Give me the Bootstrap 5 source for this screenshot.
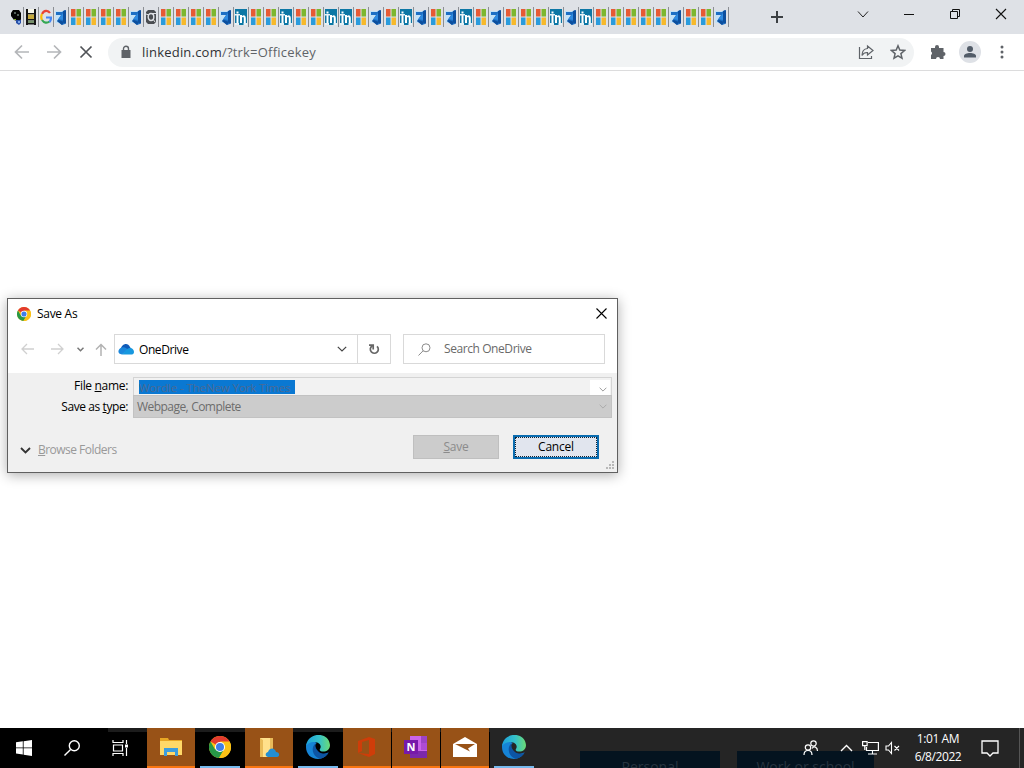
<!DOCTYPE html>
<html lang="en">
<head>
<meta charset="utf-8">
<title>Save As</title>
<link href="https://cdn.jsdelivr.net/npm/bootstrap@5.3.0/dist/css/bootstrap.min.css" rel="stylesheet">
<style>
body{font-family:"Open Sans","Noto Sans",sans-serif;font-size:12px;line-height:16px;width:1024px;height:768px;overflow:hidden;color:#000}
svg{display:block;flex:none}
.tabstrip{height:34px;background:#dee1e6;padding-left:9px}
.tab-item{width:15px;height:20px;border-right:1px solid #8b8e93;padding-left:1px}
.tab-item svg{width:12px;height:16px}
.toolbar{height:37px;border-bottom:1px solid #dcdcdd;padding-left:14px;background:#fff}
.omnibox{width:806px;height:29px;border-radius:15px;background:#f1f3f4;margin-left:14px;padding:0 7px 0 13px}
.url{font-size:13px;letter-spacing:.21px;color:#5f6368}
.url b{font-weight:400;color:#303134}
.avatar{width:22px;height:22px;background:#dee1e6}
.dialog-win{left:7px;top:298px;width:611px;height:175px;border:1px solid #606060;background:#f0f0f0;box-shadow:0 2px 12px rgba(0,0,0,.32)}
.dlg-top{height:74px;background:#fff}
.box{height:30px;border:1px solid #d9d9d9}
.lbl{width:120px;text-align:right;letter-spacing:-.32px}
.t{letter-spacing:-.3px}
.namebox{width:479px;height:18px;background:#f2f2f2;border:1px solid #d4d4d4;border-bottom:0;padding:2px 1px 0 5px}
.sel{width:156px;height:14px;background:#0a78d2;color:#4a6a94;line-height:16px;font-size:11.5px;white-space:nowrap;letter-spacing:-.1px;overflow:hidden}
.typebox{width:479px;height:23px;background:#ccc;border:1px solid #c2c2c2;color:#6d6d6d;padding:0 4px 0 3px;letter-spacing:-.28px}
.dbtn{width:86px;height:24px;border-radius:0;font-size:12px;line-height:16px;padding:0;letter-spacing:-.2px}
.b-save,.b-save:disabled{background:#ccc;border:1px solid #bfbfbf;color:#8b8b8b;opacity:1}
.b-cancel{background:#e1e5ee;border:2px solid #0a6cb0;outline:1px dotted #123;outline-offset:-3px;color:#000}
.taskbar{height:40px;background:#000;color:#fff}
.tk{width:48px;height:40px;margin-right:1px;border-bottom:2px solid transparent}
.sys{width:48px;height:40px}
.hot{background:#985217;border-bottom-color:#f97510}
.run::after{content:"";position:absolute;left:4px;right:4px;bottom:-2px;height:2px;background:#76b9ed}
.tray{background:#252525;overflow:hidden}
.ghost{top:23px;height:17px;background:#04131f;color:#27343f;font-size:14px;line-height:31px;text-align:center;white-space:nowrap}
.clock{font-size:12px;line-height:18px;letter-spacing:-.42px;width:60px;text-align:center}
.strip{left:108px;top:0;height:4px;width:382px;background:#1c1c1c}
</style>
</head>
<body class="d-flex flex-column bg-white">
<svg width="0" height="0" class="position-absolute">
 <defs>
  <symbol id="i-m" viewBox="0 0 12 16"><path fill="#e65a35" d="M1 0h4.500v7.500H1z"/><path fill="#7db72f" d="M6.500 0H11v7.500H6.500z"/><path fill="#2a9bdc" d="M1 8.500h4.500V16H1z"/><path fill="#f6b92c" d="M6.500 8.500H11V16H6.500z"/></symbol>
  <symbol id="i-v" viewBox="0 0 12 16"><path fill="#c3e1f6" d="M0 2h9v12H0z"/><path fill="#1d6fc4" d="M1 3h6l3-2v14l-3 1-5-4 4-6H1z"/><path fill="#0d4f9e" d="M8 2 11 1v14L8 13z"/><path fill="#0d4f9e" d="M2 12l2-1 5 2-2 3z"/><path fill="#2f8be0" d="M3.500 10 8 4v7z"/></symbol>
  <symbol id="i-i" viewBox="0 0 12 16"><path fill="#0c77a5" d="M0 0h12v16H0z"/><path fill="#fff" d="M1.500 2.500h2v2h-2zM1.500 6h2v8h-2zM5 6h2v1.200C8 5.500 10.800 5.700 10.800 9v5h-2V9.500C8.800 7.500 7 7.700 7 9.500V14H5z"/><path fill="#e6f2f7" d="M0 5h5v1.500H0zM0 14h4v2H0zM8.500 14H12v2H8.500z"/></symbol>
  <symbol id="i-g" viewBox="0 0 12 16"><g fill="none" stroke-width="2.200"><path stroke="#e94335" d="M2 5C4 1 8 1 10 4"/><path stroke="#fabb05" d="M2 5Q.500 8 2 11"/><path stroke="#34a853" d="M2 11c2 3 5 3.500 7.500 1.500"/><path stroke="#4285f4" d="M6 8.500h5q0 3-1.500 4.500"/></g></symbol>
  <symbol id="i-k" viewBox="0 0 12 16"><path fill="#050505" d="M3 1h6l2 3v6l-1 3-3-1-3-1-3-4V4z"/><path fill="#53605a" d="M4 3h2v2H4zM7 5h2v2H7z"/><path fill="#7fb42b" d="M4 10h2v1H4z"/><path fill="#2850a8" d="M6 11h5v3l-2 2-3-2z"/><path fill="#7ea6e8" d="M8 12h2v2H8z"/></symbol>
  <symbol id="i-w" viewBox="0 0 12 16"><path fill="#141414" d="M1 0h2v16H1zM9 0h2v16H9zM1 4h10v1.500H1zM1 10h10v1.500H1zM1 14h10v1.500H1z"/><path fill="#f5f5e9" d="M3 0h6v4H3z"/><path fill="#c5a93b" d="M3 5.500h6V10H3z"/><path fill="#78926b" d="M3 11.500h6V14H3z"/></symbol>
  <symbol id="i-o" viewBox="0 0 12 16"><path fill="#4a4d51" d="M3 1h6l2 2v10l-2 2H3l-2-2V3z"/><ellipse cx="6" cy="8" rx="2.800" ry="3.500" fill="none" stroke="#dfe1e5" stroke-width="1.400"/><path stroke="#dfe1e5" d="M1 5l3 1M8 10l2 3M6 4.500h5"/></symbol>
  <symbol id="chrome" viewBox="0 0 24 24"><circle cx="12" cy="12" r="12" fill="#fbc116"/><path fill="#e33b2e" d="M12 12 1.600 6A12 12 0 0 1 22.400 6z"/><path fill="#279847" d="M1.600 6A12 12 0 0 0 11 24l5.500-9.500H6.500z"/><path fill="#fbc116" d="M22.400 6H12l4.700 8.500L11 24A12 12 0 0 0 22.400 6z"/><circle cx="12" cy="12" r="5.500" fill="#fff"/><circle cx="12" cy="12" r="4.400" fill="#3f7ee8"/></symbol>
  <linearGradient id="eg" x1="0" y1="0" x2="1" y2="0"><stop offset="0" stop-color="#1ba0dc"/><stop offset=".55" stop-color="#35c1c9"/><stop offset="1" stop-color="#6bdb75"/></linearGradient>
  <symbol id="edge" viewBox="0 0 24 24"><path fill="#1684d6" d="M0 12C0 6 6 5 11 8c-3 1-3 6 0 9 3 2.500 8 2.500 11.500.300C20 22 16 24 12 24 5 24 0 19 0 12z"/><path fill="url(#eg)" d="M0 11.500C1-3.500 23-4 24 10c0 5-4 7-8 6.500-2.500-.500-2.700-1.700-1.900-2.800C16 10.500 13 7 8.500 7 4 7 1 9 0 11.500z"/><path fill="#0d55a4" d="M9.500 8.500c-4.500 3-4 12.500 4.500 15.300 4-.800 7-3 8.700-6.300-3.200 1.800-7.200 1.600-9.700-.5-2.500-2.200-4-4.500-3.500-8.500z"/></symbol>
  <symbol id="chev" viewBox="0 0 10 6"><path fill="none" stroke="currentColor" stroke-width="1.200" d="m.8.8 4.200 4.200L9.200.8"/></symbol>
 </defs>
</svg>

<header class="tabstrip d-flex">
 <div class="d-flex" id="tabs" style="padding-top:7px"></div>
 <svg class="ms-auto" style="margin-top:11px;margin-right:74px" width="12" height="12"><path stroke="#3c4043" stroke-width="2" d="M6 0v12M0 6h12"/></svg>
 <div class="d-flex" style="margin-top:8px;gap:34px;padding-right:17px">
  <svg width="12" height="12" fill="none" stroke="#222"><path d="m1 3.500 5 5.500 5-5.500"/></svg>
  <svg width="12" height="12" stroke="#111"><path d="M1 6.500h10"/></svg>
  <svg width="12" height="12" fill="none" stroke="#111"><path d="M1.500 3.500h7v7h-7zM3.500 3.500v-2h7v7h-2"/></svg>
  <svg width="12" height="12" stroke="#111" stroke-width="1.100"><path d="m1 1 10 10M11 1 1 11"/></svg>
 </div>
</header>

<nav class="toolbar d-flex align-items-center">
 <svg width="16" height="16" fill="none" stroke="#b4b6b9" stroke-width="1.700"><path d="M15 8H2m6-6.500L1.500 8 8 14.500"/></svg>
 <svg class="ms-3" width="16" height="16" fill="none" stroke="#b4b6b9" stroke-width="1.700"><path d="M1 8h13M8 1.500 14.500 8 8 14.500"/></svg>
 <svg class="ms-3" width="16" height="16" stroke="#505357" stroke-width="1.700"><path d="m2.500 2.500 11 11m0-11-11 11"/></svg>
 <div class="omnibox d-flex align-items-center">
  <svg width="10" height="14"><path fill="#5f6368" d="M.5 5h9v8h-9z"/><path fill="none" stroke="#5f6368" stroke-width="1.400" d="M2.500 5.500V3.800a2.500 2.500 0 0 1 5 0v1.700"/></svg>
  <span class="url" style="margin-left:11px"><b>linkedin.com</b>/?trk=Officekey</span>
  <svg class="ms-auto" width="16" height="16" fill="none" stroke="#5f6368" stroke-width="1.200"><path d="M1.500 3v11.500h12V12M9.500 2l5.500 4.500-5.500 4.500V8.500c-3-.200-4.500 1-5.500 3C4 7 6 4.800 9.500 4.500z"/></svg>
  <svg style="margin:0 1px 0 16px" width="16" height="16" fill="none" stroke="#5f6368" stroke-width="1.500"><path d="m8 1.800 1.800 4.300 4.700.400-3.600 3.100 1.100 4.600L8 11.800l-4 2.400 1.100-4.600-3.600-3.100 4.700-.400z"/></svg>
 </div>
 <svg style="margin-left:16px" width="16" height="16"><path fill="#5f6368" d="M1 4h4V3a2 2 0 0 1 4 0v1h4.500v4a2 2 0 0 1 0 4v3H10a2 2 0 0 0-4 0H1v-4a2 2 0 0 0 0-3.500z"/></svg>
 <div class="avatar rounded-circle d-flex align-items-center justify-content-center" style="margin-left:13px"><svg width="14" height="14"><circle cx="7" cy="4" r="3" fill="#525c68"/><path fill="#525c68" d="M1 12.500v-1.500c0-4 12-4 12 0v1.500z"/></svg></div>
 <svg style="margin-left:19px" width="4" height="16" fill="#5f6368"><circle cx="2" cy="3" r="1.500"/><circle cx="2" cy="8" r="1.500"/><circle cx="2" cy="13" r="1.500"/></svg>
</nav>

<main class="flex-grow-1"></main>

<section class="dialog-win position-absolute">
 <div class="dlg-top">
  <div class="d-flex align-items-center" style="height:29px;padding:0 10px 0 9px">
   <svg width="14" height="14"><use href="#chrome"/></svg>
   <span class="t" style="margin-left:6px;padding-top:1px">Save As</span>
   <svg class="ms-auto" width="11" height="11" stroke="#000" stroke-width="1.100"><path d="m.5.5 10 10m0-10-10 10"/></svg>
  </div>
  <div class="d-flex align-items-center" style="padding:6px 0 0 13px">
   <svg width="13" height="12" fill="none" stroke="#d0d0d0" stroke-width="1.300"><path d="M13 6H1m5-5L1 6l5 5"/></svg>
   <svg style="margin-left:17px" width="13" height="12" fill="none" stroke="#d0d0d0" stroke-width="1.300"><path d="M0 6h12M7 1l5 5-5 5"/></svg>
   <svg style="margin-left:13px" width="7" height="5" fill="none" stroke="#777" stroke-width="1.500"><path d="m.5.8 3 3 3-3"/></svg>
   <svg style="margin-left:11px" width="12" height="13" fill="none" stroke="#b2b2b2" stroke-width="1.500"><path d="M6 13V1.500M1 6.500l5-5 5 5"/></svg>
   <div class="box d-flex align-items-center" style="width:244px;margin-left:7px;padding:0 10px 0 3px">
    <svg width="17" height="12"><path fill="#0f5bb8" d="M3 6c0-5 7-7.500 9-2l2 3-9 2z"/><path fill="#1b87dc" d="M4 4.500c3-1 4 1 6 2l-6 5C-1.500 11 0 5.500 4 4.500z"/><path fill="#1798df" d="M8 7c4-4 8-1.500 8 2 0 2-1.500 2.500-3 2.500H4z"/></svg>
    <span style="margin-left:4px;letter-spacing:-.42px;padding-top:2px">OneDrive</span>
    <svg class="ms-auto" width="10" height="6" style="color:#444"><use href="#chev"/></svg>
   </div>
   <div class="box d-flex align-items-center justify-content-center" style="width:34px;margin-left:-1px"><svg width="12" height="12" fill="none" stroke="#666" stroke-width="1.700"><path d="M9 3.300A4 4 0 1 1 4 3M1 2.200h4.200V6.500"/></svg></div>
   <div class="box d-flex align-items-center" style="width:202px;margin-left:12px;padding-left:14px;color:#6a6a6a">
    <svg width="13" height="13" fill="none" stroke="#8b8b8b"><circle cx="8" cy="4.800" r="4"/><path d="M5.200 7.700.5 12.500"/></svg>
    <span style="margin-left:13px;letter-spacing:-.42px">Search OneDrive</span>
   </div>
  </div>
 </div>
 <div class="d-flex" style="padding-top:4px"><span class="lbl" style="padding-top:1px">File <u>n</u>ame:</span>
  <div class="namebox d-flex" style="margin-left:5px"><div class="sel">Wordle - TheNew York Times</div><div class="ms-auto bg-white d-flex align-items-end" style="width:20px;height:15px;padding:0 0 3px 9px;color:#999"><svg width="8" height="5"><use href="#chev"/></svg></div></div>
 </div>
 <div class="d-flex"><span class="lbl" style="padding-top:4px;letter-spacing:-.42px">Save as <u>t</u>ype:</span>
  <div class="typebox d-flex align-items-center" style="margin-left:5px"><span style="padding-top:1px;letter-spacing:-.55px;word-spacing:.5px">Webpage, Complete</span><svg class="ms-auto" width="8" height="5" style="color:#aaa"><use href="#chev"/></svg></div>
 </div>
 <div class="d-flex" style="padding:17px 18px 0 12px">
  <svg style="margin-top:12px" width="11" height="7" fill="none" stroke="#333" stroke-width="1.800"><path d="m1 1 4.500 4.500L10 1"/></svg>
  <span style="margin:7px 0 0 7px;color:#999;letter-spacing:-.52px"><u>B</u>rowse Folders</span>
  <button class="btn dbtn b-save ms-auto" disabled><u>S</u>ave</button>
  <button class="btn dbtn b-cancel" style="margin-left:14px">Cancel</button>
 </div>
 <svg class="position-absolute bottom-0 end-0" style="margin:2px" width="10" height="10" fill="#b8b8b8"><path d="M7 1h2v2H7zM4 4h2v2H4zM7 4h2v2H7zM1 7h2v2H1zM4 7h2v2H4zM7 7h2v2H7z"/></svg>
</section>

<footer class="taskbar d-flex position-relative">
 <div class="strip position-absolute"></div>
 <div class="sys d-flex align-items-center justify-content-center"><svg width="16" height="16" fill="#fff"><path d="M0 2.300 6.800 1.300v6.200H0zM7.600 1.200 16 0v7.500H7.600zM0 8.300h6.800v6.200L0 13.600zM7.600 8.300H16V16l-8.400-1.300z"/></svg></div>
 <div class="sys d-flex align-items-center justify-content-center"><svg width="16" height="16" fill="none" stroke="#fff" stroke-width="1.400"><circle cx="10.300" cy="5.700" r="5"/><path d="M6.600 9.400.5 15.500"/></svg></div>
 <div class="sys d-flex align-items-center justify-content-center" style="margin-right:3px"><svg width="17" height="16" fill="none" stroke="#fff" stroke-width="1.200"><path d="M1 0v2.500h10V0M1.500 5h9v6h-9zM1 16v-2.500h10V16M14.500 0v4M14.500 8v8"/><path fill="#fff" stroke="none" d="M13 4.500h3v3h-3z"/></svg></div>
 <div class="tk hot d-flex align-items-center justify-content-center position-relative"><svg width="22" height="18"><path fill="#e8a724" d="M0 0h8l1 2h13v3H0z"/><path fill="#ffd968" d="M0 3h22v14H0z"/><path fill="#3d9ddd" d="M4 10h14v8h-3v-4H7v4H4z"/></svg></div>
 <div class="tk run d-flex align-items-center justify-content-center position-relative"><svg width="22" height="22"><use href="#chrome"/></svg></div>
 <div class="tk hot d-flex align-items-center justify-content-center position-relative"><svg width="22" height="21"><path fill="#ffe08b" d="M2 1h11l2 2v17H2z"/><path fill="#e9bb59" d="M12 1h3v11h-3zM2 1l3 2v17H2z"/><path fill="#228ed3" d="M10 20c-4-1-2-5 0-5 2-5 7-4 8 0 4 0 4 5 1 5z"/></svg></div>
 <div class="tk run d-flex align-items-center justify-content-center position-relative"><svg width="24" height="24"><use href="#edge"/></svg></div>
 <div class="tk hot d-flex align-items-center justify-content-center position-relative"><svg width="20" height="22"><path fill="#cf3d09" d="m1 5 11-4 6 2v15l-6 3-11-4 11 1V4L5 6v9l-4 2z"/></svg></div>
 <div class="tk hot d-flex align-items-center justify-content-center position-relative"><svg width="24" height="24"><path fill="#ca64ea" d="M6 1h17v22H6z"/><path fill="#9d43c6" d="M17 1h6v7h-6z"/><path fill="#ae4bd5" d="M17 8h6v7h-6z"/><path fill="#7c28ab" d="M6 16h17v7H6z"/><path fill="#7719aa" d="M0 5h14v14H0z"/><text x="7" y="16" text-anchor="middle" fill="#fff" font-size="11" font-weight="700">N</text></svg></div>
 <div class="tk hot d-flex align-items-center justify-content-center position-relative"><svg width="24" height="20"><path fill="#fff" d="M0 7 12 0l12 7v13H0z"/><path fill="#985217" d="M2 7h20l-7 4.500 2 3L10 11z"/></svg></div>
 <div class="tray d-flex flex-grow-1 position-relative">
  <div class="ghost position-absolute" style="left:90px;width:140px">Personal</div>
  <div class="ghost position-absolute" style="left:247px;width:137px">Work or school</div>
  <div class="tk run d-flex align-items-center justify-content-center position-relative"><svg width="24" height="24"><use href="#edge"/></svg></div>
  <div class="d-flex align-items-center ms-auto position-relative">
   <svg width="16" height="16" fill="none" stroke="#fff" stroke-width="1.200"><circle cx="10.500" cy="3.500" r="2.700"/><circle cx="5" cy="7.500" r="2.700"/><path d="M1 15c0-6 8-6 8 0M9 8.500c2-3 5.500-1.500 5.500 2.500"/></svg>
   <svg style="margin-left:21px" width="13" height="8" fill="none" stroke="#fff" stroke-width="1.400"><path d="m1 7 5.500-5.500L12 7"/></svg>
   <svg style="margin-left:9px" width="17" height="14" fill="none" stroke="#fff" stroke-width="1.200"><path d="M6 1.500h10.400v8H4.500V6M10.500 9.500v3.500M6 13h9M.6.600h4.500v4H.6zM2.800 4.500V9"/></svg>
   <svg style="margin-left:6px" width="17" height="14" fill="none" stroke="#fff" stroke-width="1.100"><path d="M1 5h2.500L6.500 1.500v11L3.500 9H1zM9.500 5l4.500 4.500M14 5 9.500 9.500"/></svg>
   <div class="clock" style="margin-left:6px;margin-top:-1px">1:01 AM<br>6/8/2022</div>
   <svg style="margin:0 20px 0 13px" width="18" height="18" fill="none" stroke="#fff" stroke-width="1.300"><path d="M1 2h16v12h-5l-3 3-3-3H1z"/></svg>
   <span style="width:5px;height:40px;border-left:1px solid #555"></span>
  </div>
 </div>
</footer>
<script src="https://cdn.jsdelivr.net/npm/bootstrap@5.3.0/dist/js/bootstrap.bundle.min.js"></script>
<script>
// one letter per open tab's favicon
const order = "kwgvmmmmvommmmvimmimmiimvmivmvimvmmmivimmmmmvmmv";
document.getElementById("tabs").innerHTML = [...order].map(k =>
  `<div class="tab-item d-flex align-items-center"><svg><use href="#i-${k}"/></svg></div>`).join("");
</script>
</body>
</html>
